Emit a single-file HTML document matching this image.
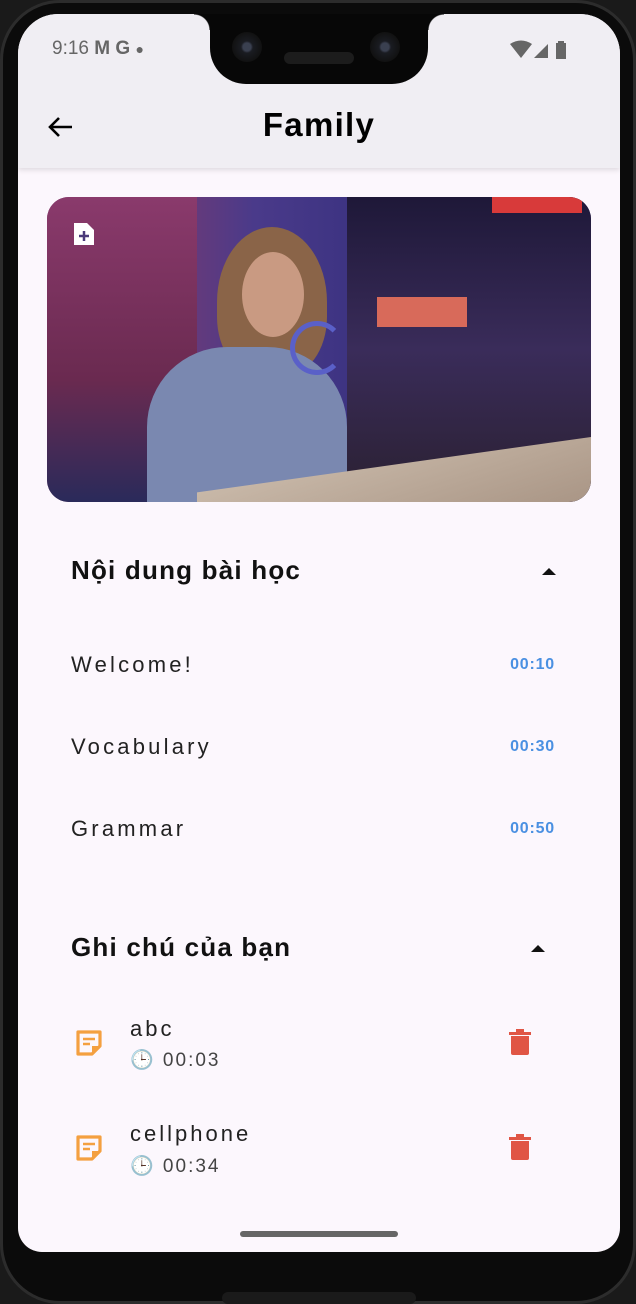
<!DOCTYPE html>
<html><head><meta charset="utf-8"><style>
*{margin:0;padding:0;box-sizing:border-box}
body{width:636px;height:1304px;background:#1a1a1a;position:relative;overflow:hidden;font-family:"Liberation Sans",sans-serif}
.phone{position:absolute;left:0;top:0;width:636px;height:1304px;border-radius:60px;background:#0b0b0b;border:3px solid #2c2c2c}
.screen{position:absolute;left:18px;top:14px;width:602px;height:1238px;background:#fcf7fd;border-radius:40px 40px 24px 24px;overflow:hidden}
.appbar{position:absolute;left:0;top:0;width:602px;height:154px;background:#f0eef3;box-shadow:0 2px 5px rgba(0,0,0,.12)}
.notch{position:absolute;left:192px;top:0;width:218px;height:70px;background:#070707;border-radius:0 0 36px 36px}
.notch:before,.notch:after{content:"";position:absolute;left:-16px;top:0;width:16px;height:16px;background:radial-gradient(circle at 0 100%,transparent 15px,#070707 16px)}
.notch:after{left:auto;right:-16px;background:radial-gradient(circle at 100% 100%,transparent 15px,#070707 16px)}
.cam{position:absolute;top:18px;width:30px;height:30px;border-radius:50%;background:radial-gradient(circle,#3a4050 0 4px,#1a1c22 6px,#111 15px)}
.spk{position:absolute;left:74px;top:38px;width:70px;height:12px;border-radius:6px;background:#1c1c1c}
.status{position:absolute;top:24px;font-size:19px;color:#666}
h1{position:absolute;left:0;width:602px;top:92px;text-align:center;font-size:33px;font-weight:bold;color:#000;letter-spacing:1.3px}
.img{position:absolute;left:29px;top:183px;width:544px;height:305px;border-radius:22px;overflow:hidden;
background:linear-gradient(90deg,#6a2a5c 0%,#7a3a70 18%,#4a3a8a 38%,#3a3280 60%,#2a2040 80%,#3a2a60 100%)}
.sec{position:absolute;left:53px;font-size:26px;font-weight:bold;color:#111;letter-spacing:1.2px}
.item{position:absolute;left:53px;font-size:22px;color:#222;letter-spacing:3.2px}
.time{position:absolute;right:65px;font-size:16px;font-weight:bold;color:#4a90e2;letter-spacing:.8px}
.tri{position:absolute;width:0;height:0;border-left:7px solid transparent;border-right:7px solid transparent;border-bottom:7px solid #111}
.nt{position:absolute;left:112px;font-size:22px;color:#222;letter-spacing:3px}
.ns{position:absolute;left:112px;font-size:19px;color:#444;letter-spacing:2px}
</style></head><body>
<div class="phone"></div>
<div class="screen">
 <div class="appbar">
  <div class="status" style="left:34px">9:16 <span style="font-weight:bold">M G</span> <span style="font-size:14px">●</span></div>
  <svg style="position:absolute;right:40px;top:26px" width="70" height="20" viewBox="0 0 70 20"><path d="M0 4 Q11 -3 22 4 L11 18Z" fill="#666"/><path d="M24 18 L38 4 L38 18Z" fill="#666"/><rect x="46" y="3" width="10" height="16" fill="#666"/><rect x="48" y="1" width="6" height="3" fill="#666"/></svg>
  <svg style="position:absolute;left:28px;top:101px" width="28" height="24" viewBox="0 0 28 24"><path d="M26 12H4M13 3L4 12L13 21" stroke="#000" stroke-width="2.6" fill="none"/></svg>
  <h1>Family</h1>
 </div>
 <div class="notch"><div class="cam" style="left:22px"></div><div class="cam" style="left:160px"></div><div class="spk"></div></div>
 <div class="img">
  <div style="position:absolute;left:300px;top:0;width:244px;height:305px;background:linear-gradient(180deg,#1e1838,#3a2c5a 50%,#2a2030)"></div>
  <div style="position:absolute;left:0;top:0;width:150px;height:305px;background:linear-gradient(180deg,#8a3a6c,#6a2a50 60%,#2a2a5a)"></div>
  <div style="position:absolute;left:170px;top:30px;width:110px;height:150px;border-radius:50% 50% 40% 40%;background:#8a6448"></div>
  <div style="position:absolute;left:195px;top:55px;width:62px;height:85px;border-radius:50%;background:#c99a82"></div>
  <div style="position:absolute;left:100px;top:150px;width:200px;height:160px;border-radius:80px 80px 0 0;background:#7a88b0"></div>
  <div style="position:absolute;left:150px;top:240px;width:394px;height:70px;background:linear-gradient(170deg,#c8b8a8,#a89484);transform:skewY(-8deg);transform-origin:right"></div>
  <div style="position:absolute;left:330px;top:100px;width:90px;height:30px;background:#d86a5a"></div>
  <div style="position:absolute;left:445px;top:0;width:90px;height:16px;background:#d83a3a"></div>
  <div style="position:absolute;left:243px;top:124px;width:54px;height:54px;border:5px solid #5a60c8;border-radius:50%;border-right-color:transparent"></div>
  <svg style="position:absolute;left:25px;top:24px" width="24" height="26" viewBox="0 0 24 26"><path d="M2 2h13l7 7v15H2z" fill="#fff"/><path d="M12 10v10M7 15h10" stroke="#4a3a7a" stroke-width="2.5"/></svg>
 </div>
 <div class="sec" style="top:541px">Nội dung bài học</div>
 <div class="tri" style="left:524px;top:554px"></div>
 <div class="item" style="top:638px">Welcome!</div><div class="time" style="top:642px">00:10</div>
 <div class="item" style="top:720px">Vocabulary</div><div class="time" style="top:724px">00:30</div>
 <div class="item" style="top:802px">Grammar</div><div class="time" style="top:806px">00:50</div>
 <div class="sec" style="top:918px">Ghi chú của bạn</div>
 <div class="tri" style="left:513px;top:931px"></div>
 <svg style="position:absolute;left:57px;top:1015px" width="28" height="28" viewBox="0 0 28 28"><path d="M3 3h22v14l-8 8H3z" fill="none" stroke="#f4a040" stroke-width="3.2" stroke-linejoin="round"/><path d="M17 25v-8h8z" fill="#f4a040"/><path d="M8 10h12M8 15h7" stroke="#f4a040" stroke-width="2.5"/></svg>
 <div class="nt" style="top:1002px">abc</div><div class="ns" style="top:1034px">🕒 00:03</div>
 <svg style="position:absolute;left:490px;top:1014px" width="24" height="28" viewBox="0 0 24 28"><path d="M1 4h22v3H1zM8 1h8v3H8z" fill="#e05545"/><path d="M3 8h18v17q0 2-2 2H5q-2 0-2-2z" fill="#e05545"/></svg>
 <svg style="position:absolute;left:57px;top:1120px" width="28" height="28" viewBox="0 0 28 28"><path d="M3 3h22v14l-8 8H3z" fill="none" stroke="#f4a040" stroke-width="3.2" stroke-linejoin="round"/><path d="M17 25v-8h8z" fill="#f4a040"/><path d="M8 10h12M8 15h7" stroke="#f4a040" stroke-width="2.5"/></svg>
 <div class="nt" style="top:1107px">cellphone</div><div class="ns" style="top:1140px">🕒 00:34</div>
 <svg style="position:absolute;left:490px;top:1119px" width="24" height="28" viewBox="0 0 24 28"><path d="M1 4h22v3H1zM8 1h8v3H8z" fill="#e05545"/><path d="M3 8h18v17q0 2-2 2H5q-2 0-2-2z" fill="#e05545"/></svg>
 <div style="position:absolute;left:222px;top:1217px;width:158px;height:6px;border-radius:3px;background:#666"></div>
</div>
<div style="position:absolute;left:222px;top:1292px;width:194px;height:12px;border-radius:6px;background:#1a1a1a"></div>
</body></html>
